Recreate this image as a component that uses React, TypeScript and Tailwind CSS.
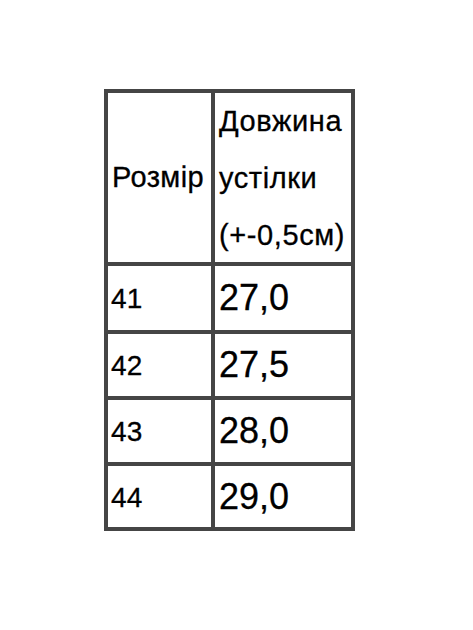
const rows = [
  { size: "41", length: "27,0", h: "h-[64px]" },
  { size: "42", length: "27,5", h: "h-[62px]" },
  { size: "43", length: "28,0", h: "h-[62px]" },
  { size: "44", length: "29,0", h: "h-[61px]" },
];

export default function App() {
  return (
    <div
      className="min-h-[630px] w-full bg-white pl-[104px] pt-[89px] text-black [-webkit-text-stroke:0.3px_black]"
      style={{ fontFamily: '"Liberation Sans", Arial, sans-serif' }}
    >
      <div className="grid w-[251px] grid-cols-[103px_136px] gap-[4px] bg-[#454545] p-[4px]">
        <div className="flex h-[169px] items-center bg-white pl-[4px] text-[29px] tracking-[0.4px]">
          Розмір
        </div>
        <div className="h-[169px] bg-white pl-[4px] text-[29px] leading-[57px] tracking-[0.6px]">
          <div>Довжина</div>
          <div>устілки</div>
          <div>(+-0,5см)</div>
        </div>

        {rows.map((row) => (
          <div className="contents" key={row.size}>
            <div
              className={`flex items-center bg-white pl-[3px] pt-[2px] text-[28px] tracking-[0.3px] ${row.h}`}
            >
              {row.size}
            </div>
            <div
              className={`flex items-center bg-white pl-[4px] text-[36px] ${row.h}`}
            >
              {row.length}
            </div>
          </div>
        ))}
      </div>
    </div>
  );
}
